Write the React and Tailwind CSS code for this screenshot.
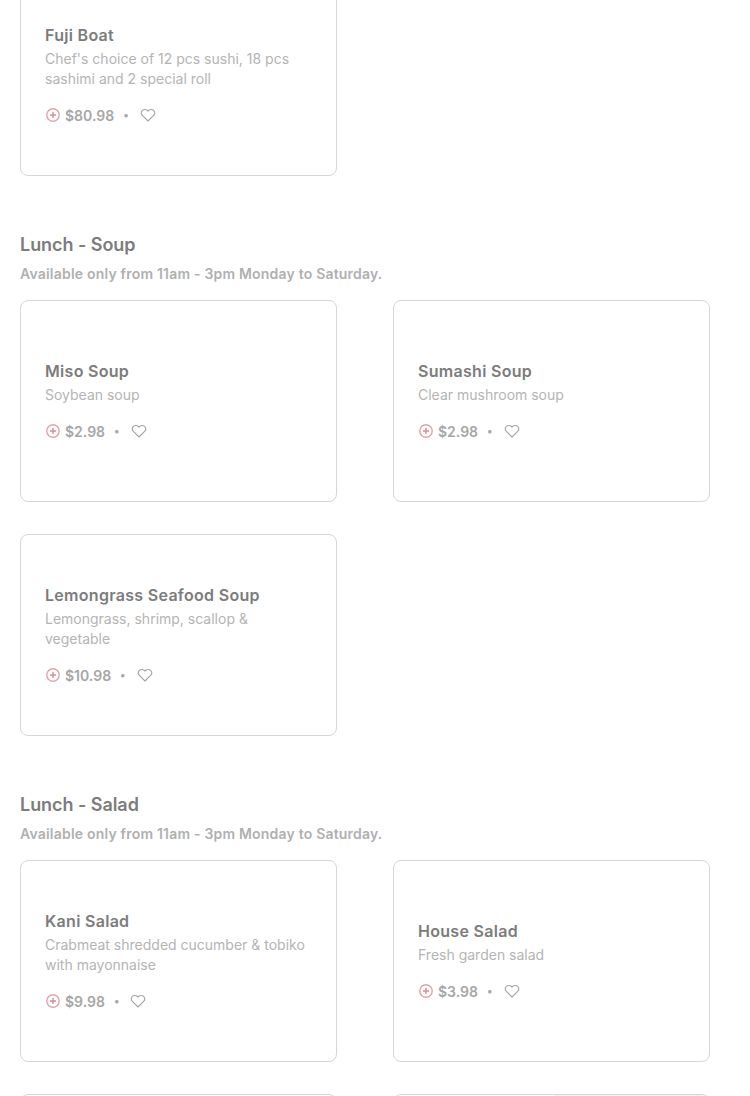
const font = { fontFamily: '"Inter", "Noto Sans", sans-serif' };

function Heart() {
  return (
    <svg width="16" height="16" viewBox="0 0 24 24" fill="none" stroke="#a3a3a3" strokeWidth="1.6" strokeLinejoin="round">
      <path d="M12 21 3.6 12.6a5.3 5.3 0 0 1 0-7.4 5.2 5.2 0 0 1 7.4 0l1 1 1-1a5.2 5.2 0 0 1 7.4 0 5.3 5.3 0 0 1 0 7.4Z" />
    </svg>
  );
}

function Plus() {
  return (
    <svg width="16" height="16" viewBox="0 0 16 16" fill="none" stroke="#e2a3ab" strokeWidth="1.4">
      <circle cx="8" cy="8" r="6.2" />
      <path d="M8 5v6M5 8h6" stroke="#d98a95" />
    </svg>
  );
}

function Card({ title, desc, price }) {
  return (
    <div className="h-[202px] rounded-lg border border-[#d6d6d6] bg-white pl-6 pr-6 flex flex-col justify-center">
      <div>
        <div className="text-[16px] leading-[24px] font-semibold text-[#7c7c7c] tracking-[0.3px]">{title}</div>
        <div className="mt-[2px] text-[14px] leading-[20px] text-[#b4b4b4]">{desc}</div>
        <div className="mt-[14px] h-[24px] flex items-center text-[14px] font-semibold text-[#a6a6a6]">
          <Plus />
          <span className="ml-[4px]">{price}</span>
          <span className="ml-[9px] mr-[11px] text-[11px] text-[#a6a6a6]">•</span>
          <Heart />
        </div>
      </div>
    </div>
  );
}

function Section({ title, children }) {
  return (
    <div className="mt-[55px]">
      <h2 className="text-[18px] leading-[28px] font-semibold text-[#7c7c7c] tracking-[-0.05px]">{title}</h2>
      <p className="mt-[5px] text-[14px] leading-[20px] font-semibold text-[#b0b0b0] tracking-[0.2px]">Available only from 11am - 3pm Monday to Saturday.</p>
      <div className="mt-[16px]">{children}</div>
    </div>
  );
}

function Grid({ children }) {
  return <div className="grid grid-cols-[317px_317px] gap-x-[56px] gap-y-[32px]">{children}</div>;
}

export default function App() {
  return (
    <div className="h-[1096px] overflow-hidden bg-white" style={font}>
      <div className="px-5 -mt-[26px]">
        <Grid>
          <Card title="Fuji Boat" desc="Chef's choice of 12 pcs sushi, 18 pcs sashimi and 2 special roll" price="$80.98" />
        </Grid>
        <Section title="Lunch - Soup">
          <Grid>
            <Card title="Miso Soup" desc="Soybean soup" price="$2.98" />
            <Card title="Sumashi Soup" desc="Clear mushroom soup" price="$2.98" />
            <Card title="Lemongrass Seafood Soup" desc="Lemongrass, shrimp, scallop & vegetable" price="$10.98" />
          </Grid>
        </Section>
        <Section title="Lunch - Salad">
          <Grid>
            <Card title="Kani Salad" desc="Crabmeat shredded cucumber & tobiko with mayonnaise" price="$9.98" />
            <Card title="House Salad" desc="Fresh garden salad" price="$3.98" />
            <div className="h-[202px] rounded-lg border border-[#d6d6d6] bg-white" />
            <div className="relative h-[202px] rounded-lg border border-[#d6d6d6] bg-white overflow-hidden">
              <div className="absolute right-0 top-0 h-full w-[155px] bg-[#f3f1fb]" />
            </div>
          </Grid>
        </Section>
      </div>
    </div>
  );
}
